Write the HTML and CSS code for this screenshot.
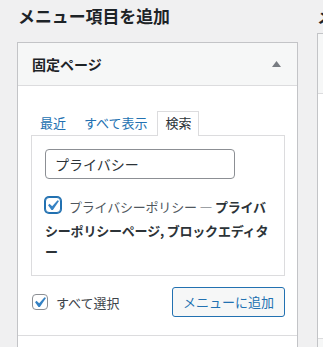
FILE: index.html
```html
<!DOCTYPE html>
<html lang="ja">
<head>
<meta charset="utf-8">
<link rel="stylesheet" href="styles.css">
</head>
<body>
<div class="page">
  <div class="col-left">
    <h2 class="title">メニュー項目を追加</h2>
    <div class="box">
      <div class="box-head">
        <h3 class="box-title">固定ページ</h3>
        <svg class="arrow" width="9" height="6" viewBox="0 0 9 6"><polygon points="4.5,0 9,6 0,6" fill="#787c82"/></svg>
      </div>
      <div class="box-body">
        <ul class="tabs">
          <li class="tab"><a class="tab-link">最近</a></li>
          <li class="tab"><a class="tab-link">すべて表示</a></li>
          <li class="tab active"><span class="tab-label">検索</span></li>
        </ul>
        <div class="panel">
          <div class="search-input">プライバシー</div>
          <div class="result">
            <span class="cb focus"><svg width="14" height="14" viewBox="3.81 2.86 13.33 13.33"><path d="M14.83 4.89l1.34.94-5.81 8.38H9.02L5.78 9.67l1.34-1.25 2.57 2.4z" fill="#3582c4"/></svg></span><span class="result-text">プライバシーポリシー — <b>プライバシーポリシーページ, ブロックエディター</b></span>
          </div>
        </div>
        <div class="actions">
          <label class="select-all"><span class="cb"><svg width="14" height="14" viewBox="3.81 2.86 13.33 13.33"><path d="M14.83 4.89l1.34.94-5.81 8.38H9.02L5.78 9.67l1.34-1.25 2.57 2.4z" fill="#3582c4"/></svg></span><span class="select-text">すべて選択</span></label>
          <button class="btn">メニューに追加</button>
        </div>
      </div>
      <div class="next-section"></div>
    </div>
  </div>
  <div class="col-right">
    <h2 class="title">メニュー構造</h2>
    <div class="box box-right">
      <div class="right-head"></div>
      <div class="right-body"></div>
      <div class="right-foot"></div>
    </div>
  </div>
</div>
</body>
</html>
```
FILE: styles.css
```css
html, body {
  margin: 0;
  padding: 0;
}
body {
  background: #f0f0f1;
  font-family: "Noto Sans CJK JP", "Noto Sans", sans-serif;
  font-size: 13px;
  color: #3c434a;
  overflow: hidden;
  width: 323px;
  height: 347px;
}
.page {
  display: flex;
  gap: 19px;
  padding-left: 17px;
  width: 1000px;
}
.col-left {
  width: 281px;
  flex: none;
}
.col-right {
  width: 600px;
  flex: none;
}
.title {
  margin: 0;
  padding-top: 4px;
  font-size: 16.9px;
  line-height: 24px;
  font-weight: 700;
  color: #1d2327;
  white-space: nowrap;
}
.col-left .title {
  margin-bottom: 14px;
  padding-left: 1px;
}
.col-right .title {
  margin-bottom: 5px;
}
.box {
  border: 1px solid #c3c4c7;
  background: #fff;
}
.box-head {
  height: 42px;
  background: #f6f7f7;
  border-bottom: 1px solid #dcdcde;
  display: flex;
  align-items: center;
  justify-content: space-between;
  padding: 0 16px 0 14px;
}
.box-title {
  margin: 0;
  font-size: 14px;
  font-weight: 700;
  color: #1d2327;
}
.arrow {
  display: block;
}
.box-body {
  padding: 25px 12px 18px 13px;
}
.tabs {
  list-style: none;
  margin: 0 0 -1px 0;
  padding: 0;
  display: flex;
  position: relative;
  z-index: 1;
}
.tab {
  border: 1px solid transparent;
  border-bottom: none;
  padding: 0 8px;
  height: 24px;
  line-height: 22px;
}
.tab-link {
  color: #2271b1;
}
.tab.active {
  border-color: #dcdcde;
  background: #fff;
  padding: 0 6px 0 8px;
  height: 24px;
}
.tab-label {
  color: #2c3338;
}
.panel {
  border: 1px solid #dcdcde;
  padding: 13px 13px 13px 13px;
}
.search-input {
  box-sizing: border-box;
  width: 190px;
  height: 30px;
  border: 1px solid #8c8f94;
  border-radius: 4px;
  padding: 0 9px;
  font-size: 14px;
  line-height: 28px;
  color: #2c3338;
}
.result {
  margin-top: 17px;
  line-height: 21px;
  letter-spacing: -0.2px;
}
.cb {
  display: inline-block;
  box-sizing: border-box;
  width: 16px;
  height: 16px;
  border: 1px solid #8c8f94;
  border-radius: 4px;
  background: #fff;
  flex: none;
}
.cb svg {
  display: block;
  overflow: visible;
}
.result .cb {
  vertical-align: top;
  margin: 1px 8px 7px 0;
}
.cb.focus {
  border-color: #2271b1;
  box-shadow: 0 0 0 1px #2271b1;
}
.result-text {
  color: #50575e;
}
.result-text b {
  font-weight: 700;
  color: #2c3338;
}
.actions {
  margin-top: 11px;
  display: flex;
  align-items: center;
  justify-content: space-between;
}
.select-all {
  display: flex;
  align-items: center;
  gap: 8px;
  color: #3c434a;
  padding-left: 1px;
}
.btn {
  height: 30px;
  padding: 0 10px;
  border: 1px solid #2271b1;
  border-radius: 3px;
  background: #f6f7f7;
  color: #2271b1;
  font-family: "Noto Sans CJK JP", "Noto Sans", sans-serif;
  font-size: 13px;
  line-height: 28px;
  white-space: nowrap;
}
.next-section {
  border-top: 1px solid #dcdcde;
  height: 40px;
  background: #fff;
}
.right-head {
  height: 59px;
  background: #f6f7f7;
  border-bottom: 1px solid #dcdcde;
}
.right-body {
  height: 244px;
  background: #fff;
}
.right-foot {
  border-top: 1px solid #dcdcde;
  background: #f6f7f7;
  height: 40px;
}
```
